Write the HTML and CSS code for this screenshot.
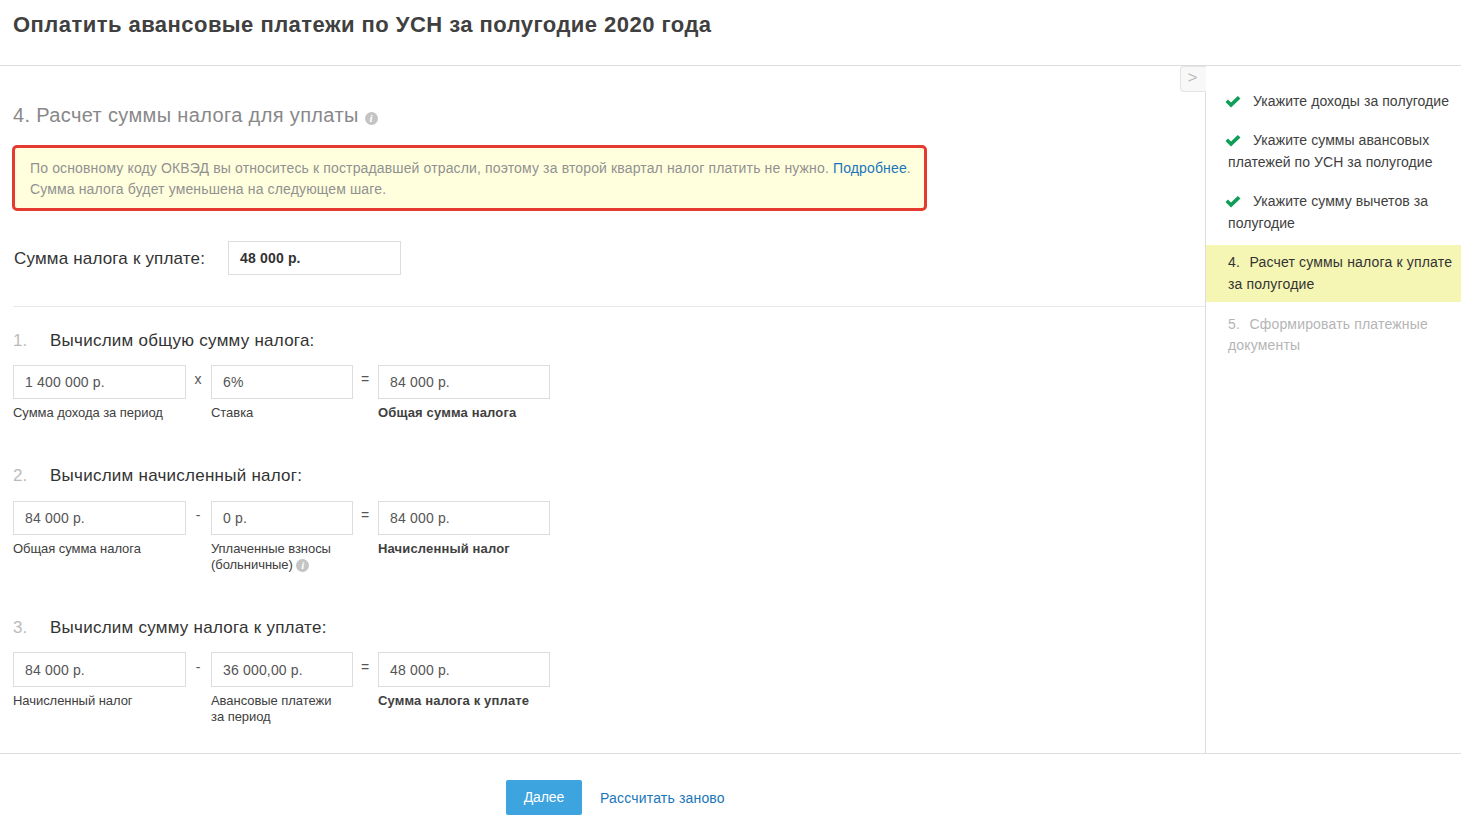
FILE: index.html
```html
<!DOCTYPE html>
<html lang="ru">

<head>
    <meta charset="UTF-8">
    <title>Оплатить авансовые платежи</title>
    <link rel="stylesheet" href="styles.css">
</head>

<body>
    <header class="top">
        <h1>Оплатить авансовые платежи по УСН за полугодие 2020 года</h1>
    </header>

    <div class="middle">
        <main class="content">
            <h2>4. Расчет суммы налога для уплаты <span class="info info_title">i</span></h2>

            <div class="notice">
                По основному коду ОКВЭД вы относитесь к пострадавшей отрасли, поэтому за второй квартал налог платить не нужно. <a href="#">Подробнее</a>.<br>
                Сумма налога будет уменьшена на следующем шаге.
            </div>

            <div class="total">
                <span class="total_label">Сумма налога к уплате:</span>
                <div class="field field_total">48 000 р.</div>
            </div>

            <section class="calc calc_first">
                <h3><span class="num">1.</span>Вычислим общую сумму налога:</h3>
                <div class="calc_row">
                    <div class="col col_a">
                        <div class="field">1 400 000 р.</div>
                        <p>Сумма дохода за период</p>
                    </div>
                    <span class="op">х</span>
                    <div class="col col_b">
                        <div class="field">6%</div>
                        <p>Ставка</p>
                    </div>
                    <span class="op">=</span>
                    <div class="col col_c">
                        <div class="field">84 000 р.</div>
                        <p class="result">Общая сумма налога</p>
                    </div>
                </div>
            </section>

            <section class="calc calc_second">
                <h3><span class="num">2.</span>Вычислим начисленный налог:</h3>
                <div class="calc_row">
                    <div class="col col_a">
                        <div class="field">84 000 р.</div>
                        <p>Общая сумма налога</p>
                    </div>
                    <span class="op">-</span>
                    <div class="col col_b">
                        <div class="field">0 р.</div>
                        <p>Уплаченные взносы<br>(больничные) <span class="info">i</span></p>
                    </div>
                    <span class="op">=</span>
                    <div class="col col_c">
                        <div class="field">84 000 р.</div>
                        <p class="result">Начисленный налог</p>
                    </div>
                </div>
            </section>

            <section class="calc calc_third">
                <h3><span class="num">3.</span>Вычислим сумму налога к уплате:</h3>
                <div class="calc_row">
                    <div class="col col_a">
                        <div class="field">84 000 р.</div>
                        <p>Начисленный налог</p>
                    </div>
                    <span class="op">-</span>
                    <div class="col col_b">
                        <div class="field">36 000,00 р.</div>
                        <p>Авансовые платежи<br>за период</p>
                    </div>
                    <span class="op">=</span>
                    <div class="col col_c">
                        <div class="field">48 000 р.</div>
                        <p class="result">Сумма налога к уплате</p>
                    </div>
                </div>
            </section>
        </main>

        <aside class="steps">
            <button class="toggle" type="button">&gt;</button>
            <ul>
                <li class="done">
                    <svg class="check" viewBox="0 0 16 12"><path d="M.5 6 L3 3.5 L6 6.5 L12.8 0 L15.5 2.5 L6 11.5 Z" /></svg>Укажите доходы за полугодие
                </li>
                <li class="done">
                    <svg class="check" viewBox="0 0 16 12"><path d="M.5 6 L3 3.5 L6 6.5 L12.8 0 L15.5 2.5 L6 11.5 Z" /></svg>Укажите суммы авансовых платежей по УСН за полугодие
                </li>
                <li class="done">
                    <svg class="check" viewBox="0 0 16 12"><path d="M.5 6 L3 3.5 L6 6.5 L12.8 0 L15.5 2.5 L6 11.5 Z" /></svg>Укажите сумму вычетов за полугодие
                </li>
                <li class="current">4.&nbsp;&nbsp;&hairsp;Расчет суммы налога к уплате за полугодие</li>
                <li class="todo">5.&nbsp;&nbsp;&hairsp;Сформировать платежные документы</li>
            </ul>
        </aside>
    </div>

    <footer class="bottom">
        <a class="btn" href="#">Далее</a>
        <a class="again" href="#">Рассчитать заново</a>
    </footer>
</body>

</html>
```

FILE: styles.css
```css
* {
    box-sizing: border-box;
}

body {
    margin: 0;
    font-family: "Liberation Sans", Arial, sans-serif;
    font-size: 14px;
    color: #404040;
    background: #fff;
}

a {
    color: #1a75bb;
    text-decoration: none;
}

.top {
    height: 66px;
    padding: 11px 13px 0;
    border-bottom: 1px solid #ddd;
}

h1 {
    margin: 0;
    font-size: 22px;
    line-height: 28px;
    font-weight: bold;
    letter-spacing: .46px;
    color: #404040;
}

.middle {
    display: flex;
    height: 688px;
    border-bottom: 1px solid #ddd;
}

.content {
    width: 1206px;
    padding: 37px 0 0 13px;
    border-right: 1px solid #ddd;
}

h2 {
    margin: 0;
    font-size: 20px;
    line-height: 24px;
    font-weight: normal;
    letter-spacing: .36px;
    color: #888;
}

.info {
    display: inline-block;
    width: 13px;
    height: 13px;
    border-radius: 50%;
    background: #c4c4c4;
    color: #fff;
    font-family: "Liberation Serif", serif;
    font-size: 11px;
    font-style: italic;
    font-weight: bold;
    line-height: 13px;
    letter-spacing: 0;
    text-align: center;
    vertical-align: 0;
}

.notice {
    width: 915px;
    height: 66px;
    margin: 18px 0 0 -1px;
    padding: 10px 0 0 15px;
    border: 3px solid #e53a2f;
    border-radius: 5px;
    background: #ffffdd;
    color: #919191;
    font-size: 14px;
    line-height: 21px;
    letter-spacing: .14px;
}

.total {
    display: flex;
    align-items: center;
    height: 34px;
    margin-top: 30px;
}

.total_label {
    width: 214px;
    margin-left: 1px;
    padding-top: 1px;
    font-size: 17px;
    letter-spacing: .18px;
    color: #333;
}

.field {
    height: 34px;
    padding: 0 11px;
    border: 1px solid #ddd;
    font-size: 14px;
    line-height: 32px;
    letter-spacing: .17px;
    color: #555;
}

.field_total {
    width: 173px;
    font-weight: bold;
    color: #333;
}

.calc_first {
    height: 157px;
    margin-top: 31px;
    padding-top: 21px;
    border-top: 1px solid #e8e8e8;
}

.calc_second {
    height: 152px;
}

.calc_second h3 {
    margin-bottom: 13px;
}

.calc_third .field {
    height: 35px;
    line-height: 34px;
}

.calc_third .op {
    line-height: 30px;
}

h3 {
    display: flex;
    margin: 0 0 12px;
    font-size: 17px;
    line-height: 25px;
    font-weight: normal;
    letter-spacing: .25px;
    color: #333;
}

.num {
    width: 37px;
    letter-spacing: 0;
    color: #bbb;
}

.calc_row {
    display: flex;
}

.col_a {
    width: 173px;
}

.col_b {
    width: 142px;
}

.col_c {
    width: 172px;
}

.col p {
    margin: 6px 0 0;
    font-size: 13px;
    line-height: 16px;
    letter-spacing: -.05px;
    color: #404040;
}

.col .result {
    font-weight: bold;
    letter-spacing: .15px;
}

.op {
    width: 25px;
    padding-right: 1px;
    font-size: 14px;
    line-height: 28px;
    text-align: center;
    color: #555;
}

.steps {
    position: relative;
    flex: 1;
    padding-top: 24px;
}

.toggle {
    position: absolute;
    top: 0;
    left: -26px;
    width: 26px;
    height: 26px;
    padding: 0 2px 2px 0;
    border: 1px solid #e4e4e4;
    border-right: 0;
    border-radius: 4px 0 0 4px;
    background: #f8f8f8;
    color: #bbb;
    font-family: "Liberation Sans", Arial, sans-serif;
    font-size: 17px;
    line-height: 20px;
}

.steps ul {
    margin: 0;
    padding: 0;
    list-style: none;
}

.steps li {
    padding: 0 0 0 22px;
    font-size: 14px;
    line-height: 22px;
    letter-spacing: .07px;
    margin-bottom: 17px;
    color: #404040;
}

.check {
    display: inline-block;
    width: 16px;
    height: 12px;
    margin: 0 12px 0 -3px;
    vertical-align: -2px;
    fill: #0f9d58;
}

.steps .current {
    height: 57px;
    margin: -6px 0 12px;
    padding-top: 6px;
    letter-spacing: .17px;
    color: #333;
    background: #f6f6b4;
}

.steps .todo {
    line-height: 21px;
    letter-spacing: .17px;
    color: #b5b5b5;
}

.bottom {
    display: flex;
    align-items: center;
    height: 69px;
    padding: 18px 0 0 506px;
}

.btn {
    width: 76px;
    height: 35px;
    border-radius: 2px;
    background: #3da4e0;
    color: #fff;
    font-size: 14px;
    line-height: 34px;
    letter-spacing: -.1px;
    text-align: center;
}

.again {
    margin-left: 18px;
    font-size: 14px;
    letter-spacing: .18px;
}
```
